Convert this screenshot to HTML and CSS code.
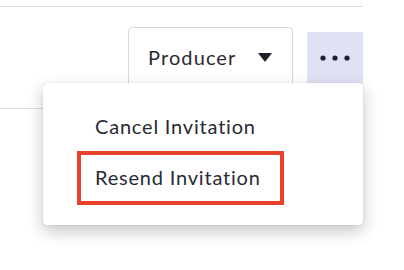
FILE: index.html
```html
<!DOCTYPE html>
<html lang="en">
<head>
    <meta charset="UTF-8">
    <meta name="viewport" content="width=device-width, initial-scale=1.0">
    <title>Member Actions</title>
    <link rel="stylesheet" href="styles.css">
</head>
<body>
    <div class="page">
        <div class="top-rule"></div>

        <!-- Invited member row -->
        <div class="member-row">
            <div class="actions">
                <button class="role-select">
                    <span>Producer</span>
                    <svg class="caret" width="14" height="9" viewBox="0 0 14 9">
                        <path d="M0 0 H14 L7 9 Z" fill="#1f1f29"/>
                    </svg>
                </button>
                <button class="more-button">
                    <svg width="30" height="6" viewBox="0 0 30 6">
                        <circle cx="3" cy="3" r="2.6" fill="#1f1f29"/>
                        <circle cx="15" cy="3" r="2.6" fill="#1f1f29"/>
                        <circle cx="27" cy="3" r="2.6" fill="#1f1f29"/>
                    </svg>
                </button>
            </div>
        </div>

        <!-- Open actions menu -->
        <div class="menu">
            <div class="menu-item">Cancel Invitation</div>
            <div class="menu-item highlighted">Resend Invitation</div>
        </div>
    </div>
</body>
</html>
```

FILE: styles.css
```css
* {
    margin: 0;
    padding: 0;
    box-sizing: border-box;
    font-family: Lato, 'Open Sans', sans-serif;
}

body {
    background-color: #fff;
    color: #2a2a35;
}

.page {
    position: relative;
    width: 363px;
    height: 270px;
}

.top-rule {
    height: 7px;
    border-bottom: 1px solid #dcdce6;
}

.member-row {
    height: 102px;
    border-bottom: 1px solid #dcdce6;
}

.actions {
    display: flex;
    justify-content: flex-end;
    align-items: flex-start;
    padding-top: 20px;
}

.role-select {
    display: flex;
    align-items: center;
    justify-content: space-between;
    width: 165px;
    height: 60px;
    padding: 0 20px 0 19px;
    margin-right: 14px;
    background-color: #fff;
    border: 1px solid #d8d8e0;
    border-radius: 4px;
    font-size: 20px;
    letter-spacing: 1.1px;
    color: #2a2a35;
}

.caret {
    display: block;
}

.more-button {
    display: flex;
    align-items: center;
    justify-content: center;
    width: 56px;
    height: 51px;
    margin-top: 5px;
    background-color: #dfe1f5;
    border: none;
}

.more-button svg {
    display: block;
}

/* Dropdown sits over the row */
.menu {
    position: absolute;
    left: 43px;
    top: 83px;
    width: 320px;
    height: 142px;
    display: flex;
    flex-direction: column;
    align-items: flex-start;
    gap: 13px;
    padding: 31px 0 20px 34px;
    background-color: #fff;
    border-radius: 4px;
    box-shadow: 0 0 1px rgba(0, 0, 0, 0.25), 0 6px 16px rgba(0, 0, 0, 0.24);
}

.menu-item {
    font-size: 20px;
    line-height: 24px;
    letter-spacing: 0.8px;
    padding-left: 18px;
    color: #2a2a35;
}

.menu-item.highlighted {
    width: 207px;
    height: 54px;
    padding: 10px 0 0 14px;
    border: 4px solid #e8412a;
}
```
